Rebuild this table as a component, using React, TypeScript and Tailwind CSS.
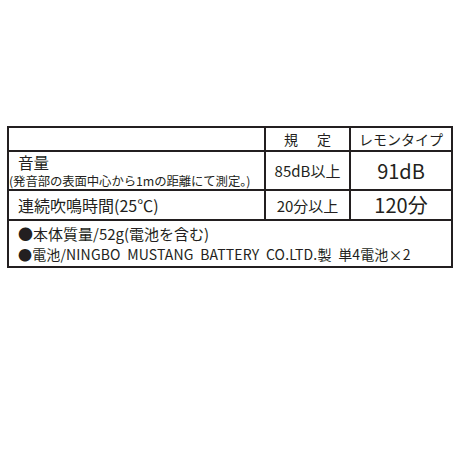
export default function App() {
  return (
    <div
      className="w-[460px] h-[460px] bg-white text-[#231f20] pt-[126px] pl-[7px]"
      style={{ fontFamily: '"Noto Sans CJK JP", "Noto Sans", sans-serif' }}
    >
      <div className="w-[446px] border-2 border-[#231f20]">
        <div className="grid grid-cols-[255px_85px_1fr] h-[24px] border-b-2 border-[#231f20]">
          <div />
          <div className="border-l-2 border-[#231f20] flex items-center justify-center gap-[19px] text-[14px] leading-none">
            <span>規</span>
            <span>定</span>
          </div>
          <div className="border-l-2 border-[#231f20] flex items-center justify-center text-[14px] leading-none">
            レモンタイプ
          </div>
        </div>
        <div className="grid grid-cols-[255px_85px_1fr] h-[39px] border-b-2 border-[#231f20]">
          <div className="flex flex-col pt-[2px]">
            <div className="text-[15.5px] leading-[15px] h-[21px] pl-[9px] pt-[1px]">音量</div>
            <div className="text-[12.4px] leading-[13px] tracking-[-0.1px] whitespace-nowrap">
              (発音部の表面中心から1mの距離にて測定。)
            </div>
          </div>
          <div className="border-l-2 border-[#231f20] flex items-center justify-center text-[15px] leading-none">
            85dB以上
          </div>
          <div className="border-l-2 border-[#231f20] flex items-center justify-center text-[20px] leading-none">
            91dB
          </div>
        </div>
        <div className="grid grid-cols-[255px_85px_1fr] h-[30px] border-b-2 border-[#231f20]">
          <div className="flex items-center pl-[9px] text-[16px] leading-none">
            連続吹鳴時間(25℃)
          </div>
          <div className="border-l-2 border-[#231f20] flex items-center justify-center text-[15px] leading-none">
            20分以上
          </div>
          <div className="border-l-2 border-[#231f20] flex items-center justify-center text-[20px] leading-none">
            120分
          </div>
        </div>
        <div className="flex flex-col justify-center h-[45px] pl-[9px] gap-[2px]">
          <div className="text-[15px] leading-[18px]">●本体質量/52g(電池を含む)</div>
          <div className="text-[14px] leading-[18px] whitespace-pre tracking-[0.15px]">
            ●電池/NINGBO  MUSTANG  BATTERY  CO.LTD.製  単4電池×2
          </div>
        </div>
      </div>
    </div>
  );
}
